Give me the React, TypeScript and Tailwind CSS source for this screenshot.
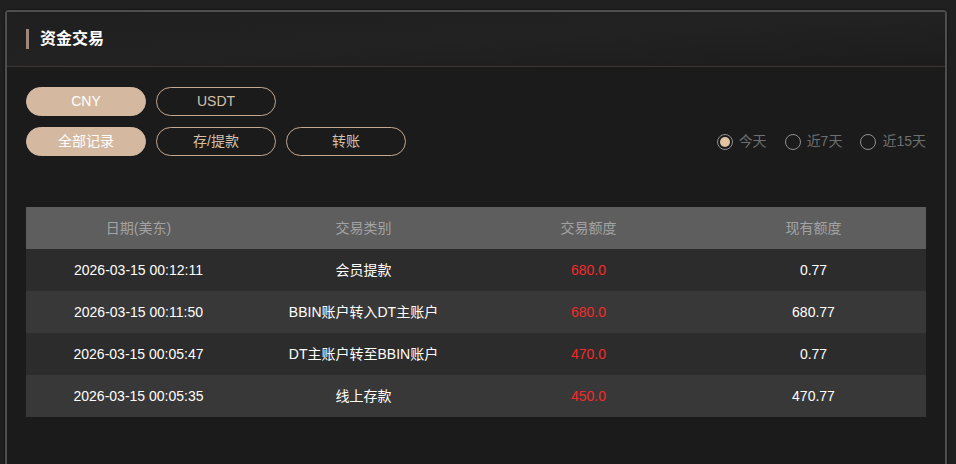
import React from 'react';

const rows = [
  { date: '2026-03-15 00:12:11', type: '会员提款', amount: '680.0', balance: '0.77' },
  { date: '2026-03-15 00:11:50', type: 'BBIN账户转入DT主账户', amount: '680.0', balance: '680.77' },
  { date: '2026-03-15 00:05:47', type: 'DT主账户转至BBIN账户', amount: '470.0', balance: '0.77' },
  { date: '2026-03-15 00:05:35', type: '线上存款', amount: '450.0', balance: '470.77' },
];

const Pill: React.FC<{ label: string; active?: boolean }> = ({ label, active }) => (
  <button
    className={`w-[120px] h-[29px] rounded-full text-[14px] flex items-center justify-center ${
      active
        ? 'bg-[#d4b9a0] text-white border border-[#d4b9a0]'
        : 'border border-[#c4a98e] text-[#d6c0aa]'
    }`}
  >
    {label}
  </button>
);

const Radio: React.FC<{ label: string; checked?: boolean }> = ({ label, checked }) => (
  <label className="flex items-center gap-[6px] text-[14px] text-[#6f6f6f]">
    <span className="w-[16px] h-[16px] rounded-full border-[1.5px] border-[#8f8f8f] flex items-center justify-center">
      {checked && <span className="w-[10px] h-[10px] rounded-full bg-[#e2c3a2]" />}
    </span>
    {label}
  </label>
);

export default function App() {
  return (
    <div
      className="min-h-[464px] bg-[#202020] pt-[10px] pl-[5px] pr-[9px]"
      style={{ fontFamily: '"Liberation Sans", "Noto Sans CJK SC", sans-serif' }}
    >
      <div className="h-[460px] border-2 border-[#4e4e4e] rounded-[4px] bg-[#1b1b1b] shadow-[0_0_3px_rgba(0,0,0,0.6)]">
        <div className="h-[55px] border-b border-[#3d3531] bg-gradient-to-br from-[#1f1f1f] via-[#222222] to-[#1c1c1c] flex items-center pl-[19px]">
          <span className="w-[3px] h-[20px] bg-[#9c8778] mr-[11px]" />
          <span className="text-white text-[16px] font-bold">资金交易</span>
        </div>
        <div className="px-[19px] pt-[20px]">
          <div className="flex gap-[10px]">
            <Pill label="CNY" active />
            <Pill label="USDT" />
          </div>
          <div className="flex items-center justify-between mt-[11px]">
            <div className="flex gap-[10px]">
              <Pill label="全部记录" active />
              <Pill label="存/提款" />
              <Pill label="转账" />
            </div>
            <div className="flex items-center gap-[18px]">
              <Radio label="今天" checked />
              <Radio label="近7天" />
              <Radio label="近15天" />
            </div>
          </div>
          <div className="mt-[51px] w-[900px] text-[14px]">
            <div className="grid grid-cols-4 h-[42px] bg-[#5e5e5e] text-[#a3a3a3] items-center text-center">
              <div>日期(美东)</div>
              <div>交易类别</div>
              <div>交易额度</div>
              <div>现有额度</div>
            </div>
            {rows.map((r, i) => (
              <div
                key={i}
                className={`grid grid-cols-4 h-[42px] items-center text-center text-white ${
                  i % 2 === 0 ? 'bg-[#2c2c2c]' : 'bg-[#383838]'
                }`}
              >
                <div>{r.date}</div>
                <div>{r.type}</div>
                <div className="text-[#f42b2b]">{r.amount}</div>
                <div>{r.balance}</div>
              </div>
            ))}
          </div>
        </div>
      </div>
    </div>
  );
}
